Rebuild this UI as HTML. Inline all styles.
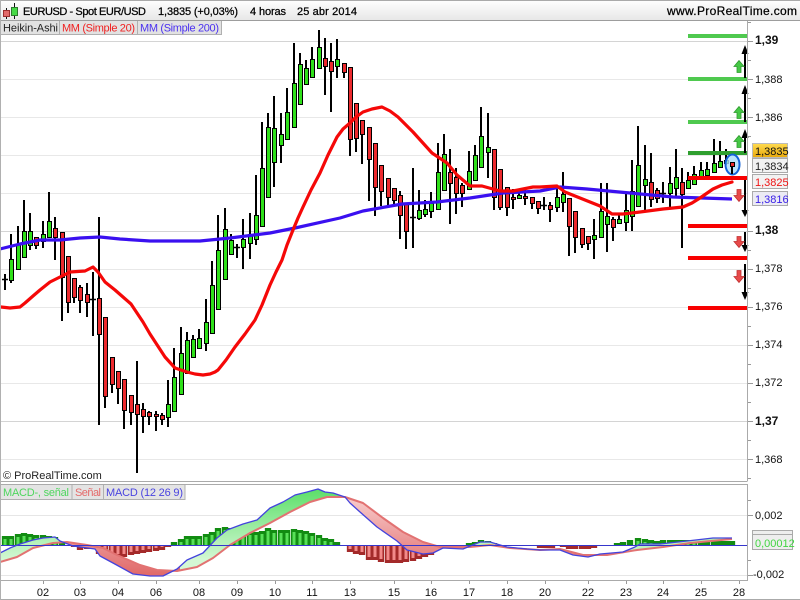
<!DOCTYPE html>
<html lang="es"><head><meta charset="utf-8"><title>EURUSD</title>
<style>html,body{margin:0;padding:0;background:#fff;width:800px;height:600px;overflow:hidden}svg{display:block}text{font-family:"Liberation Sans",Arial,sans-serif;font-size:11px}</style>
</head><body>
<svg width="800" height="600" viewBox="0 0 800 600" xmlns="http://www.w3.org/2000/svg">
<defs>
<linearGradient id="hd" x1="0" y1="0" x2="0" y2="1"><stop offset="0" stop-color="#fff"/><stop offset="1" stop-color="#e6e6e6"/></linearGradient>
<linearGradient id="gold" x1="0" y1="0" x2="0" y2="1"><stop offset="0" stop-color="#ffdb50"/><stop offset="1" stop-color="#e9a90c"/></linearGradient>
<linearGradient id="rg" gradientUnits="userSpaceOnUse" x1="0" y1="490" x2="0" y2="560"><stop offset="0" stop-color="#5ddf6a"/><stop offset="1" stop-color="#d4f8d4"/></linearGradient>
<linearGradient id="rr" gradientUnits="userSpaceOnUse" x1="0" y1="497" x2="0" y2="576"><stop offset="0" stop-color="#f8cccc"/><stop offset="1" stop-color="#e06868"/></linearGradient>
<clipPath id="cg"><path d="M0 480h62v110H0zM180 480h165v110H180zM465 480h30v110h-30zM625 480h110v110H625z"/></clipPath>
<clipPath id="cr"><path d="M62 480h118v110H62zM345 480h120v110H345zM495 480h130v110H495z"/></clipPath>
<polygon id="rib" points="0,553 10,548 20,544 33,540 43,538 55,537 60,541 73,546 95,549 100,556 113,563 133,574 150,576 163,576 177,569 187,560 203,553 217,538 227,530 243,524 257,520 270,508 283,502 295,495 307,492 318,489 325,492 333,493 345,497 350,503 360,512 377,527 397,541 407,550 423,554 433,553 443,548 463,549 480,542 490,542 507,547 527,549 540,550 560,550 573,555 588,557 600,554 623,552 635,547 640,544 660,544 687,541 713,538 732,538 732,539 690,543 663,547 637,550 607,555 583,555 560,549 540,550 510,548 490,545 470,547 440,547 423,542 403,532 383,518 363,503 345,497 327,497 310,502 290,512 270,523 250,533 230,545 213,558 197,567 177,571 157,570 140,565 117,555 103,548 87,545 67,542 53,543 33,548 17,557 0,562"/>
</defs>

<rect width="800" height="600" fill="#fff"/>

<!-- main grid -->
<path d="M1 79.5H747M1 117.5H747M1 155.5H747M1 269.5H747M1 307.5H747M1 345.5H747M1 383.5H747M1 459.5H747M1 193.5H747" stroke="#e8e8e8" stroke-width="1"/>
<path d="M1 41.5H747M1 231.5H747M1 421.5H747" stroke="#d4d4d4" stroke-width="1"/>

<!-- wicks -->
<path fill="none" stroke="#000" stroke-width="2" d="M5 274V290M11 234V283M18 226V270M24 200V258M30 213V250M36 237V249M43 221V248M49 192V238M55 217V260M62 232V321M68 256V313M74 278V303M80 285V313M87 283V317M93 272V336M99 217V425M105 317V408M112 357V393M118 371V404M124 379V429M131 395V425M137 361V473M143 403V433M149 411V425M156 411V431M162 413V425M168 380V427M174 348V412M181 327V394M187 332V373M193 335V357M199 329V348M206 299V351M212 261V333M218 215V309M225 208V279M231 234V254M237 244V258M243 219V269M250 213V259M256 175V245M262 122V226M268 113V197M274 96V187M281 113V163M287 88V139M294 43V128M300 53V104M306 60V84M312 47V77M319 30V68M325 38V95M331 43V112M337 39V78M344 63V78M350 67V156M356 103V152M362 120V164M369 127V201M375 143V216M381 165V206M388 178V206M394 188V205M400 191V239M406 203V249M413 168V248M419 190V220M425 200V217M431 192V218M438 143V209M444 134V190M450 149V224M456 168V214M462 183V207M469 151V190M475 145V180M481 107V167M488 113V178M494 149V210M500 169V210M507 187V216M513 189V209M519 189V199M525 190V205M532 197V209M538 201V214M544 197V210M550 202V222M557 188V212M563 172V212M569 198V256M575 211V253M582 228V248M588 236V250M594 219V259M601 183V237M607 183V252M613 217V241M619 213V223M626 193V231M632 160V231M638 126V206M645 145V210M651 153V207M657 188V203M663 182V203M670 167V207M676 149V198M682 168V248M688 172V188M694 166V185M701 162V177M707 162V176M714 139V172M720 141V167M726 149V165M732 167V174"/>
<path fill="none" stroke="#000" stroke-width="1.5" d="M2 279.5h6M90 299.5h6M234 247.5h6M410 217.5h6M541 205.5h6M660 193.5h6"/>

<!-- green bodies -->
<g transform="translate(.5 .5)">
<path fill="#2fe01a" stroke="#000" stroke-width="1" d="M9 259h4v21h-4zM16 244h4v25h-4zM22 231h4v26h-4zM28 231h4v14h-4zM41 234h4v7h-4zM47 221h4v16h-4zM166 404h4v13h-4zM172 377h4v34h-4zM179 353h4v41h-4zM185 340h4v33h-4zM191 339h4v18h-4zM197 338h4v10h-4zM204 322h4v21h-4zM210 285h4v48h-4zM216 250h4v59h-4zM223 229h4v50h-4zM229 240h4v14h-4zM241 239h4v8h-4zM248 234h4v9h-4zM254 215h4v24h-4zM260 168h4v58h-4zM266 127h4v70h-4zM272 128h4v34h-4zM279 134h4v11h-4zM285 112h4v27h-4zM292 83h4v44h-4zM298 64h4v40h-4zM304 68h4v16h-4zM310 59h4v18h-4zM317 47h4v21h-4zM335 59h4v7h-4zM417 210h4v8h-4zM423 209h4v5h-4zM429 203h4v8h-4zM436 172h4v37h-4zM442 154h4v36h-4zM467 171h4v18h-4zM473 155h4v25h-4zM479 136h4v31h-4zM486 147h4v5h-4zM517 195h4v3h-4zM555 197h4v10h-4zM561 194h4v8h-4zM592 235h4v4h-4zM599 211h4v26h-4zM605 216h4v8h-4zM617 219h4v4h-4zM624 210h4v12h-4zM630 191h4v25h-4zM636 165h4v41h-4zM643 179h4v6h-4zM668 183h4v10h-4zM674 177h4v11h-4zM686 180h4v8h-4zM692 174h4v10h-4zM699 170h4v7h-4zM705 169h4v6h-4zM712 163h4v9h-4zM718 161h4v6h-4zM724 160h4v3h-4z"/>
<!-- red bodies -->
<path fill="#ec2a2e" stroke="#000" stroke-width="1" d="M34 237h4v8h-4zM53 228h4v9h-4zM60 232h4v45h-4zM66 256h4v46h-4zM72 278h4v19h-4zM78 287h4v13h-4zM85 294h4v8h-4zM97 298h4v36h-4zM103 317h4v79h-4zM110 357h4v27h-4zM116 371h4v17h-4zM122 379h4v31h-4zM129 395h4v17h-4zM135 404h4v10h-4zM141 409h4v7h-4zM147 412h4v4h-4zM154 414h4v2h-4zM160 415h4v4h-4zM323 58h4v8h-4zM329 61h4v10h-4zM342 63h4v9h-4zM348 67h4v72h-4zM354 103h4v35h-4zM360 120h4v14h-4zM367 127h4v32h-4zM373 143h4v44h-4zM379 165h4v26h-4zM386 178h4v19h-4zM392 188h4v12h-4zM398 195h4v20h-4zM404 203h4v28h-4zM448 172h4v11h-4zM454 177h4v16h-4zM460 185h4v8h-4zM492 149h4v48h-4zM498 169h4v38h-4zM505 187h4v20h-4zM511 197h4v2h-4zM523 196h4v2h-4zM530 197h4v6h-4zM536 201h4v7h-4zM548 205h4v4h-4zM567 198h4v28h-4zM573 211h4v26h-4zM580 228h4v16h-4zM586 236h4v7h-4zM611 219h4v8h-4zM649 182h4v17h-4zM655 190h4v8h-4zM680 182h4v12h-4z"/>
</g>

<!-- moving averages -->
<polyline fill="none" stroke="#3a10f0" stroke-width="3.2" stroke-linejoin="round" points="0,249 20,244 40,240 60,240 80,238 100,237 120,239 150,241 180,241 200,241 230,238 270,233 295,228 340,218 363,211 402,204 437,202 470,198 503,193 540,191 560,187 587,189 630,193 673,197 732,199"/>
<polyline fill="none" stroke="#f50808" stroke-width="3.2" stroke-linejoin="round" stroke-linecap="round" points="1,307 10,308 20,307 25,303 33,296 40,290 50,282 60,277 70,272 85,271 93,267 98,272 105,282 115,290 123,297 131,304 143,322 150,334 165,357 175,368 187,372 195,374 203,375 210,374 215,372 218,370 226,360 235,347 245,334 255,320 262,305 270,285 276,272 282,260 287,245 293,230 298,218 303,207 311,190 320,173 328,155 337,137 343,129 350,123 356,117 363,112 372,109 382,107 390,111 398,117 413,132 432,153 447,163 457,175 470,186 482,186 500,191 513,191 533,187 540,187 557,186 565,192 580,198 600,206 612,214 623,214 640,212 663,209 683,207 692,203 700,198 713,189 722,185 732,182"/>

<!-- levels -->
<path stroke="#4fc94f" stroke-width="4" d="M688 36H747M688 79H747M688 122H747"/>
<path stroke="#2f9f2f" stroke-width="4" d="M688 153H747"/>
<path stroke="#f80000" stroke-width="4" d="M688 178H747M688 226H747M688 258H747M688 308H747"/>

<!-- ellipse + last candle -->
<ellipse cx="732.5" cy="164.5" rx="7" ry="10" fill="#a9dcfb" fill-opacity=".8" stroke="#1463d8" stroke-width="2"/>
<path fill="none" stroke="#000" stroke-width="2" d="M732 166V174"/>
<path fill="#ec2a2e" stroke="#000" d="M730.5 162.5h4v4h-4z"/>

<!-- arrows -->
<path stroke="#000" stroke-width="2" fill="none" d="M745 50V78M745 91V122M745 135V153M745 180V214M745 232V248M745 264V295"/>
<path fill="#000" d="M745 45l3.5 9h-7zM745 85l3.5 9h-7zM745 129l3.5 9h-7zM745 217l-3.5-7h7zM745 252l-3.5-7h7zM745 300l-3.5-8h7z"/>
<path fill="#46c846" stroke="#2d9a2d" stroke-width=".8" d="M739 60.5l5 6h-3v6h-4v-6h-3zM739 106.5l5 6h-3v6h-4v-6h-3zM739 135.5l5 6h-3v6h-4v-6h-3z"/>
<path fill="#e84a4a" stroke="#c03030" stroke-width=".8" d="M737 189.5h4v6h3l-5 6-5-6h3zM737 236.5h4v5h3l-5 6-5-6h3zM737 270.5h4v6h3l-5 6-5-6h3z"/>

<!-- axis main -->
<path stroke="#aaa" stroke-width="1" d="M747.5 21V481M0 481.5H747.5"/>
<path stroke="#999" stroke-width="1" d="M748 41.5h5M748 79.5h5M748 117.5h5M748 231.5h5M748 269.5h5M748 307.5h5M748 345.5h5M748 383.5h5M748 421.5h5M748 459.5h5M748 22.5h3M748 60.5h3M748 98.5h3M748 136.5h3M748 250.5h3M748 288.5h3M748 326.5h3M748 364.5h3M748 402.5h3M748 440.5h3M748 478.5h3"/>

<!-- axis labels -->
<g fill="#111">
<text x="755" y="44" style="font-weight:bold;font-size:12px">1,39</text>
<text x="755" y="83">1,388</text>
<text x="755" y="121">1,386</text>
<text x="755" y="234" style="font-weight:bold;font-size:12px">1,38</text>
<text x="755" y="272">1,378</text>
<text x="755" y="310">1,376</text>
<text x="755" y="348">1,374</text>
<text x="755" y="386">1,372</text>
<text x="755" y="425" style="font-weight:bold;font-size:12px">1,37</text>
<text x="755" y="463">1,368</text>
</g>

<!-- price boxes -->
<rect x="752.5" y="143.5" width="35" height="14" fill="url(#gold)" stroke="#bbb"/>
<text x="755" y="155" fill="#111">1,3835</text>
<rect x="752.5" y="158.5" width="35" height="14" fill="#f2f2f2" stroke="#aaa"/>
<text x="755" y="170" fill="#222">1,3834</text>
<rect x="752.5" y="174.5" width="35" height="14" fill="#f2f2f2" stroke="#aaa"/>
<text x="755" y="186" fill="#ef1515">1,3825</text>
<rect x="752.5" y="191.5" width="35" height="14" fill="#ecebf4" stroke="#aaa"/>
<text x="755" y="203" fill="#3a20e8">1,3816</text>

<text x="3" y="479" fill="#222">© ProRealTime.com</text>

<!-- MACD panel -->
<path stroke="#e6e6e6" d="M1 515.5H747M1 575.5H747"/>
<path fill="none" stroke="#128c12" stroke-width="6.3" d="M5 545V536M11 545V536M18 545V534M24 545V533M30 545V534M36 545V535M43 545V535M49 545V536M55 545V537M62 545V542M174 545V542M181 545V539M187 545V536M193 545V536M199 545V536M206 545V534M212 545V532M218 545V528M225 545V527M231 545V528M237 545V529M243 545V530M250 545V532M256 545V532M262 545V531M268 545V528M274 545V530M281 545V530M287 545V530M294 545V529M300 545V530M306 545V531M312 545V533M319 545V535M325 545V538M331 545V539M337 545V542M469 545V543M475 545V542M481 545V540M488 545V541M494 545V543M617 545V543M623 545V542M630 545V540M638 545V538M645 545V539M651 545V540M657 545V541M663 545V540M670 545V540M676 545V540M682 545V540M688 545V540M694 545V540M701 545V541M707 545V541M714 545V541M720 545V541M726 545V541M732 545V541"/>
<path fill="none" stroke="#58e058" stroke-width="3" d="M5 545V539M11 545V539M18 545V537M24 545V536M30 545V537M36 545V538M43 545V538M49 545V539M55 545V540M181 545V542M187 545V539M193 545V539M199 545V539M206 545V537M212 545V535M218 545V531M225 545V530M231 545V531M237 545V532M243 545V533M250 545V535M256 545V535M262 545V534M268 545V531M274 545V533M281 545V533M287 545V533M294 545V532M300 545V533M306 545V534M312 545V536M319 545V538M325 545V541M331 545V542M481 545V543M638 545V541M645 545V542M651 545V543M663 545V543M670 545V543M676 545V543M682 545V543M688 545V543M694 545V543"/>
<path fill="none" stroke="#a42a2a" stroke-width="6.3" d="M68 545V546M74 545V547M80 545V550M87 545V549M93 545V549M99 545V554M105 545V556M112 545V556M118 545V557M124 545V557M131 545V555M137 545V554M143 545V553M149 545V552M156 545V551M162 545V550M168 545V547M350 545V552M356 545V554M362 545V555M369 545V560M375 545V560M381 545V562M388 545V563M394 545V563M400 545V563M406 545V562M413 545V561M419 545V559M425 545V557M431 545V555M438 545V549M444 545V548M450 545V547M456 545V546M507 545V546M519 545V546M526 545V546M540 545V548M546 545V548M552 545V548M563 545V547M569 545V549M575 545V549M582 545V549M588 545V549M594 545V548"/>
<path fill="none" stroke="#f28a8a" stroke-width="3" d="M80 545V547M99 545V551M105 545V553M112 545V553M118 545V554M124 545V554M131 545V552M137 545V551M143 545V550M149 545V549M156 545V548M162 545V547M350 545V549M356 545V551M362 545V552M369 545V557M375 545V557M381 545V559M388 545V560M394 545V560M400 545V560M406 545V559M413 545V558M419 545V556M425 545V554M431 545V552"/>
<use href="#rib" fill="url(#rg)" clip-path="url(#cg)"/>
<use href="#rib" fill="url(#rr)" clip-path="url(#cr)"/>
<polyline fill="none" stroke="#e27272" stroke-width="2" stroke-linejoin="round" points="0,562 17,557 33,548 53,543 67,542 87,545 103,548 117,555 140,565 157,570 177,571 197,567 213,558 230,545 250,533 270,523 290,512 310,502 327,497 345,497 363,503 383,518 403,532 423,542 440,547 470,547 490,545 510,548 540,550 560,549 583,555 607,555 637,550 663,547 690,543 732,539"/>
<path stroke="#3636cc" stroke-width="1" d="M1 545.5H747"/>
<polyline fill="none" stroke="#4343dd" stroke-width="1.3" stroke-linejoin="round" points="0,553 10,548 20,544 33,540 43,538 55,537 60,541 73,546 95,549 100,556 113,563 133,574 150,576 163,576 177,569 187,560 203,553 217,538 227,530 243,524 257,520 270,508 283,502 295,495 307,492 318,489 325,492 333,493 345,497 350,503 360,512 377,527 397,541 407,550 423,554 433,553 443,548 463,549 480,542 490,542 507,547 527,549 540,550 560,550 573,555 588,557 600,554 623,552 635,547 640,544 660,544 687,541 713,538 732,538"/>

<!-- MACD axes -->
<path stroke="#aaa" d="M0 484.5H747.5M747.5 484V581M0 580.5H747.5M0 599.5H800"/>
<path stroke="#999" d="M748 515.5h5M748 575.5h5M748 500.5h3M748 560.5h3M43.5 581v3M80.5 581v3M118.5 581v3M156.5 581v3M199.5 581v3M237.5 581v3M275.5 581v3M312.5 581v3M350.5 581v3M394.5 581v3M431.5 581v3M469.5 581v3M507.5 581v3M545.5 581v3M588.5 581v3M626.5 581v3M663.5 581v3M701.5 581v3M739.5 581v3"/>
<text x="755" y="519" fill="#111">0,002</text>
<text x="753" y="578" fill="#111">-0,002</text>
<path fill="#eee" stroke="#aaa" d="M752.5 530.5h40v4h-40zM752.5 534.5h40v15h-40z"/>
<text x="755" y="547" fill="#42d642">0,00012</text>

<!-- date labels -->
<g fill="#111" text-anchor="middle">
<text x="43" y="596">02</text><text x="80" y="596">03</text><text x="118" y="596">04</text><text x="156" y="596">06</text><text x="199" y="596">08</text><text x="237" y="596">09</text><text x="275" y="596">10</text><text x="312" y="596">11</text><text x="350" y="596">13</text><text x="394" y="596">15</text><text x="431" y="596">16</text><text x="469" y="596">17</text><text x="507" y="596">18</text><text x="545" y="596">20</text><text x="588" y="596">22</text><text x="626" y="596">23</text><text x="663" y="596">24</text><text x="701" y="596">25</text><text x="739" y="596">28</text>
</g>

<!-- MACD legend -->
<rect x="1" y="485" width="71" height="14" fill="#e4e4e4"/>
<rect x="72" y="485" width="31" height="14" fill="#e4e4e4"/>
<rect x="103" y="485" width="82" height="14" fill="#e4e4e4"/>
<path stroke="#b0b0b0" fill="none" d="M72 485V499M103.5 485V499M185 485V499.5H1"/>
<text x="3" y="496" fill="#4ed65e" textLength="66">MACD-, señal</text>
<text x="75" y="496" fill="#e56a6a" textLength="26">Señal</text>
<text x="106" y="496" fill="#4a44e0" textLength="77">MACD (12 26 9)</text>

<!-- header -->
<rect x="0" y="0" width="800" height="21" fill="url(#hd)"/>
<path stroke="#aaa" d="M0 .5H800M0 20.5H800"/>
<path stroke="#8f8f8f" d="M0 20.5H800" stroke-opacity=".5"/>
<path stroke="#b0b0b0" d="M.5 0V600"/>
<path d="M6.5 8V19M14.5 3V19" stroke="#111" stroke-width="1"/>
<rect x="3.5" y="10.5" width="6" height="6" fill="#e26a6a" stroke="#9b2d2d"/>
<rect x="11.5" y="7.5" width="6" height="8" fill="#45d945" stroke="#2d7a2d"/>
<g fill="#000" stroke="#000" stroke-width=".25">
<text x="23" y="15" textLength="123">EURUSD - Spot EUR/USD</text>
<text x="158" y="15" textLength="80">1,3835 (+0,03%)</text>
<text x="250" y="15" textLength="36">4 horas</text>
<text x="297" y="15" textLength="60">25 abr 2014</text>
<text x="667" y="15" textLength="130" style="font-size:12px">www.ProRealTime.com</text>
</g>

<!-- top legend -->
<rect x="1" y="21" width="220" height="14" fill="#e2e2e2"/>
<path stroke="#b0b0b0" fill="none" d="M59.5 21V35M137.5 21V35M221.5 21V34.5H1"/>
<text x="3" y="31.5" fill="#222" textLength="55">Heikin-Ashi</text>
<text x="62" y="31.5" fill="#f02020" textLength="73">MM (Simple 20)</text>
<text x="140" y="31.5" fill="#4a30f0" textLength="79">MM (Simple 200)</text>
</svg>
</body></html>
